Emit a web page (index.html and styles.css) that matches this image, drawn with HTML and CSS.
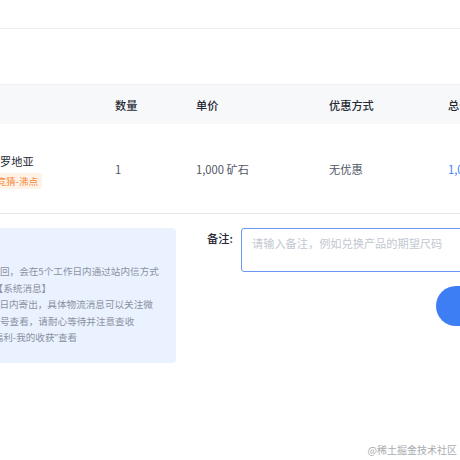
FILE: index.html
```html
<!DOCTYPE html>
<html lang="zh-CN">
<head>
<meta charset="utf-8">
<title>兑换确认</title>
<link rel="stylesheet" href="styles.css">
</head>
<body>
<div class="page">
  <div class="topbar"></div>
  <div class="table">
    <div class="thead">
      <div class="cell"></div>
      <div class="cell">数量</div>
      <div class="cell">单价</div>
      <div class="cell">优惠方式</div>
      <div class="cell">总价</div>
    </div>
    <div class="trow">
      <div class="cell cell-name">
        <div class="pname">罗地亚</div>
        <div class="tag">竞猜-沸点</div>
      </div>
      <div class="cell muted">1</div>
      <div class="cell muted">1,000 矿石</div>
      <div class="cell muted">无优惠</div>
      <div class="cell total">1,000 矿石</div>
    </div>
  </div>
  <div class="bottom">
    <div class="notice">
      <div class="line">回，会在5个工作日内通过站内信方式</div>
      <div class="line shift-a">【系统消息】</div>
      <div class="line shift-b">日内寄出，具体物流消息可以关注微</div>
      <div class="line">号查看，请耐心等待并注意查收</div>
      <div class="line shift-a">福利-我的收获<span class="q">”</span>查看</div>
    </div>
    <div class="remark">
      <div class="remark-row">
        <label class="remark-label" for="remark">备注:</label>
        <textarea id="remark" class="remark-input" placeholder="请输入备注，例如兑换产品的期望尺码"></textarea>
      </div>
      <button class="submit" type="button">确认兑换</button>
    </div>
  </div>
  <div class="watermark">@稀土掘金技术社区</div>
</div>
</body>
</html>
```

FILE: styles.css
```css
html, body {
  margin: 0;
  padding: 0;
  background: #ffffff;
}

body {
  font-family: "Noto Sans CJK SC", "Noto Sans", sans-serif;
  font-size: 11.2px;
  color: #252933;
}

.page {
  position: relative;
  width: 460px;
  height: 460px;
  overflow: hidden;
}

.topbar {
  height: 28px;
  border-bottom: 1px solid #eceef1;
  margin-bottom: 55px;
}

.thead,
.trow {
  display: grid;
  grid-template-columns: 115px 81px 133px 119px 200px;
  align-items: center;
  white-space: nowrap;
}

.thead {
  height: 39px;
  border-top: 1px solid #eef0f3;
  background: #f7f8fa;
  font-weight: 500;
  color: #252933;
}

.trow {
  height: 89px;
  border-bottom: 1px solid #e6e8eb;
}

.cell-name {
  padding-top: 5px;
  margin-left: -8px;
}

.pname {
  padding-left: 8px;
  line-height: 16px;
  color: #252933;
}

.tag {
  display: inline-block;
  margin-top: 4px;
  height: 16px;
  line-height: 16px;
  padding: 0 4px 0 4.4px;
  font-size: 9.6px;
  color: #f7893a;
  background: #fff3e8;
  border-radius: 2px;
}

.muted {
  color: #515767;
}

.total {
  color: #3d82f7;
}

.bottom {
  display: flex;
  align-items: flex-start;
  margin-top: 14px;
}

.notice {
  flex: none;
  width: 176px;
  box-sizing: border-box;
  padding: 35px 0 16px;
  background: #eaf2ff;
  border-radius: 0 4px 4px 0;
  font-size: 9.6px;
  line-height: 16.5px;
  color: #8a919f;
  white-space: nowrap;
  overflow: hidden;
}

.q {
  font-family: "Noto Sans", sans-serif;
}

.shift-a {
  margin-left: -6.4px;
}

.shift-b {
  margin-left: -0.6px;
}

.remark {
  flex: none;
  width: 320px;
  margin-left: 31px;
  display: flex;
  flex-direction: column;
}

.remark-row {
  display: flex;
  align-items: flex-start;
}

.remark-label {
  flex: none;
  width: 34px;
  line-height: 20px;
  font-weight: 500;
  color: #252933;
}

.remark-input {
  flex: 1;
  box-sizing: border-box;
  height: 44px;
  margin: 0;
  padding: 6px 10px;
  border: 1px solid #6a97f1;
  border-radius: 3px;
  font-family: inherit;
  font-size: 11.2px;
  line-height: 16px;
  color: #252933;
  resize: none;
  outline: none;
}

.remark-input::placeholder {
  color: #c2c8d1;
}

.submit {
  align-self: flex-end;
  width: 91px;
  height: 40px;
  margin-top: 14px;
  padding: 0 0 0 30px;
  border: none;
  border-radius: 20px;
  background: #3e7ef5;
  color: #ffffff;
  font-family: inherit;
  font-size: 11.2px;
  text-align: left;
}

.watermark {
  position: absolute;
  right: 3px;
  bottom: 3px;
  font-size: 10px;
  line-height: 14px;
  color: #a9abb0;
}
```
